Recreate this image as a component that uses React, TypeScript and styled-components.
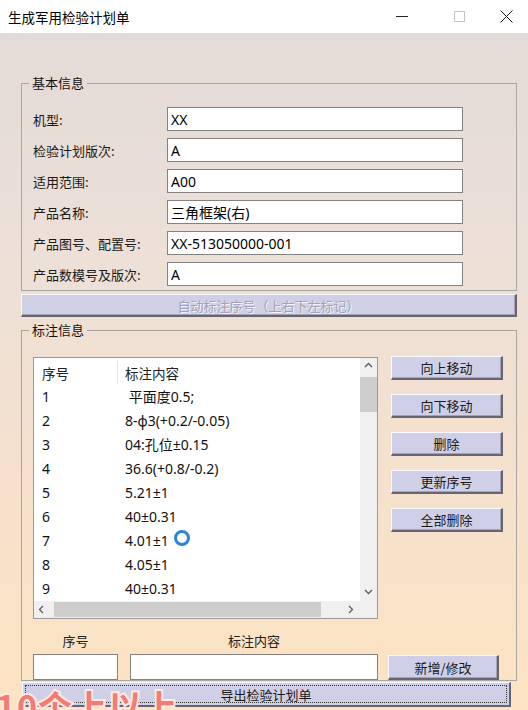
import React from "react";
import styled, { createGlobalStyle } from "styled-components";

const basicRows = [
  { label: "机型:", value: "XX" },
  { label: "检验计划版次:", value: "A" },
  { label: "适用范围:", value: "A00" },
  { label: "产品名称:", value: "三角框架(右)" },
  { label: "产品图号、配置号:", value: "XX-513050000-001" },
  { label: "产品数模号及版次:", value: "A" },
];

const marks = [
  " 平面度0.5;",
  "8-φ3(+0.2/-0.05)",
  "04:孔位±0.15",
  "36.6(+0.8/-0.2)",
  "5.21±1",
  "40±0.31",
  "4.01±1",
  "4.05±1",
  "40±0.31",
];

const sideButtons = ["向上移动", "向下移动", "删除", "更新序号", "全部删除"];

const Chevron = ({ dir }: { dir: "up" | "down" | "left" | "right" }) => {
  const pts = {
    up: "1,5 4.5,1.5 8,5",
    down: "1,2 4.5,5.5 8,2",
    left: "5,1 1.5,4.5 5,8",
    right: "2,1 5.5,4.5 2,8",
  }[dir];
  return (
    <svg width="9" height="9" viewBox="0 0 9 9">
      <polyline points={pts} fill="none" stroke="#5a5a5a" strokeWidth="1.3" />
    </svg>
  );
};

const App = () => {
  return (
    <>
      <GlobalStyle />
      <Window>
        <TitleBar>
          <Title>生成军用检验计划单</Title>
          <WinButton $w={64}>
            <MinIcon />
          </WinButton>
          <WinButton $w={50}>
            <MaxIcon />
          </WinButton>
          <WinButton $w={44}>
            <svg width="13" height="13" viewBox="0 0 13 13">
              <path d="M0.5 0.5 L12.5 12.5 M12.5 0.5 L0.5 12.5" stroke="#111" strokeWidth="1" />
            </svg>
          </WinButton>
        </TitleBar>

        <Body>
          <Group $top={42} $pad="16px 53px 4px 11px">
            <Legend>基本信息</Legend>
            <Rows>
              {basicRows.map((r) => (
                <FieldRow key={r.label}>
                  <FieldLabel>{r.label}</FieldLabel>
                  <TextBox $w={296} $h={24} defaultValue={r.value} readOnly />
                </FieldRow>
              ))}
            </Rows>
          </Group>

          <AutoButton disabled>自动标注序号（上右下左标记）</AutoButton>

          <Group $top={5} $pad="19px 13px 0 11px">
            <Legend>标注信息</Legend>
            <ListArea>
              <ListView>
                <Table>
                  <HeadRow>
                    <HeadCell $first>序号</HeadCell>
                    <HeadCell>标注内容</HeadCell>
                  </HeadRow>
                  {marks.map((m, i) => (
                    <ItemRow key={i}>
                      <Cell $first>{i + 1}</Cell>
                      <Cell>{m}</Cell>
                    </ItemRow>
                  ))}
                </Table>
                <VScroll>
                  <Arrow>
                    <Chevron dir="up" />
                  </Arrow>
                  <VTrack>
                    <VThumb />
                  </VTrack>
                  <Arrow>
                    <Chevron dir="down" />
                  </Arrow>
                </VScroll>
                <HScroll>
                  <Arrow>
                    <Chevron dir="left" />
                  </Arrow>
                  <HTrack>
                    <HThumb />
                  </HTrack>
                  <Arrow>
                    <Chevron dir="right" />
                  </Arrow>
                </HScroll>
                <Corner />
              </ListView>
              <SideButtons>
                {sideButtons.map((b) => (
                  <Btn key={b} $w={112} $h={24}>
                    {b}
                  </Btn>
                ))}
              </SideButtons>
            </ListArea>

            <EditLabels>
              <EditLabel $w={85}>序号</EditLabel>
              <EditLabel $w={248}>标注内容</EditLabel>
            </EditLabels>
            <EditRow>
              <TextBox $w={85} $h={26} readOnly />
              <TextBox $w={248} $h={26} readOnly />
              <Btn $w={111} $h={25}>新增/修改</Btn>
            </EditRow>
          </Group>

          <ExportButton>
            <FocusRect>导出检验计划单</FocusRect>
          </ExportButton>
        </Body>

        <CursorRing />
        <Subtitle>10个上以上</Subtitle>
      </Window>
    </>
  );
};

const GlobalStyle = createGlobalStyle`
  html, body {
    margin: 0;
    padding: 0;
  }
  body {
    font-family: "Noto Sans", "Noto Sans CJK SC", sans-serif;
    color: #111;
  }
`;

const Window = styled.div`
  position: relative;
  width: 528px;
  height: 710px;
  overflow: hidden;
  display: flex;
  flex-direction: column;
  background: linear-gradient(180deg, #e2dad7 0%, #ece0d8 35%, #f6e1cc 70%, #fde3c2 100%);
`;

const TitleBar = styled.div`
  height: 33px;
  flex-shrink: 0;
  background: #fff;
  display: flex;
  align-items: center;
  padding-left: 8px;
`;

const Title = styled.div`
  flex: 1;
  font-family: "Noto Sans CJK SC", sans-serif;
  font-size: 13.5px;
  color: #000;
`;

const WinButton = styled.div<{ $w: number }>`
  width: ${(p) => p.$w}px;
  height: 33px;
  display: flex;
  align-items: center;
  justify-content: center;
`;

const MinIcon = styled.div`
  width: 12px;
  height: 1px;
  background: #222;
`;

const MaxIcon = styled.div`
  width: 9px;
  height: 9px;
  border: 1px solid #c4c4c4;
`;

const Body = styled.div`
  display: flex;
  flex-direction: column;
  padding: 0 11px 0 21px;
`;

const Group = styled.fieldset<{ $top: number; $pad: string }>`
  margin: ${(p) => p.$top}px 0 0 0;
  padding: ${(p) => p.$pad};
  min-width: 0;
  border: 1px solid #a9a5a1;
`;

const Legend = styled.legend`
  font-family: "Noto Sans CJK SC", sans-serif;
  font-size: 13px;
  line-height: 16px;
  padding: 0 3px;
  margin-left: -4px;
  color: #111;
`;

const Rows = styled.div`
  display: flex;
  flex-direction: column;
  gap: 7px;
`;

const FieldRow = styled.div`
  display: flex;
  align-items: center;
  height: 24px;
`;

const FieldLabel = styled.div`
  width: 134px;
  font-family: "Noto Sans CJK SC", sans-serif;
  font-size: 13px;
  color: #1a1a1a;
`;

const TextBox = styled.input<{ $w: number; $h: number }>`
  box-sizing: border-box;
  width: ${(p) => p.$w}px;
  height: ${(p) => p.$h}px;
  border: 1px solid #858180;
  background: #fff;
  padding: 0 3px;
  font-family: "Noto Sans", "Noto Sans CJK SC", sans-serif;
  font-size: 14px;
  color: #000;
  outline: none;
`;

const Btn = styled.button<{ $w: number; $h: number }>`
  box-sizing: border-box;
  width: ${(p) => p.$w}px;
  height: ${(p) => p.$h}px;
  padding: 0;
  background: #cfd0e7;
  border-top: 1px solid #fafaff;
  border-left: 1px solid #fafaff;
  border-right: 2px solid #666672;
  border-bottom: 2px solid #666672;
  box-shadow: inset -1px -1px 0 #a3a3b4;
  font-family: "Noto Sans CJK SC", sans-serif;
  font-size: 13px;
  color: #1a1a1a;
`;

const AutoButton = styled.button`
  box-sizing: border-box;
  margin-top: 3px;
  width: 496px;
  height: 23px;
  padding: 0;
  background: #cfd0e6;
  border-top: 1px solid #fafaff;
  border-left: 1px solid #fafaff;
  border-right: 2px solid #666672;
  border-bottom: 2px solid #666672;
  box-shadow: inset -1px -1px 0 #a3a3b4;
  font-family: "Noto Sans CJK SC", sans-serif;
  font-size: 13px;
  color: #a2a2b6;
  text-shadow: 1px 1px 0 #f4f4fb;
`;

const ListArea = styled.div`
  display: flex;
  align-items: flex-start;
  gap: 13px;
`;

const ListView = styled.div`
  box-sizing: border-box;
  width: 345px;
  height: 262px;
  border: 1px solid #9a9a9a;
  background: #fff;
  display: grid;
  grid-template-columns: 1fr 17px;
  grid-template-rows: 1fr 17px;
`;

const Table = styled.div`
  overflow: hidden;
  display: flex;
  flex-direction: column;
`;

const HeadRow = styled.div`
  display: flex;
  height: 26px;
  flex-shrink: 0;
`;

const HeadCell = styled.div<{ $first?: boolean }>`
  box-sizing: border-box;
  width: ${(p) => (p.$first ? "84px" : "auto")};
  flex: ${(p) => (p.$first ? "none" : "1")};
  padding-left: ${(p) => (p.$first ? "8px" : "7px")};
  display: flex;
  align-items: center;
  font-family: "Noto Sans CJK SC", sans-serif;
  font-size: 13.5px;
  color: #222;
  border-right: ${(p) => (p.$first ? "1px solid #e6e6e6" : "none")};
  margin: 3px 0 0;
`;

const ItemRow = styled.div`
  display: flex;
  height: 24px;
  flex-shrink: 0;
  align-items: center;
`;

const Cell = styled.div<{ $first?: boolean }>`
  box-sizing: border-box;
  width: ${(p) => (p.$first ? "84px" : "auto")};
  flex: ${(p) => (p.$first ? "none" : "1")};
  padding-left: ${(p) => (p.$first ? "8px" : "7px")};
  white-space: pre;
  font-family: "Noto Sans", "Noto Sans CJK SC", sans-serif;
  font-size: 14px;
  color: #111;
`;

const VScroll = styled.div`
  display: flex;
  flex-direction: column;
  background: #f0f0f0;
`;

const HScroll = styled.div`
  display: flex;
  background: #f0f0f0;
`;

const Corner = styled.div`
  background: #f0f0f0;
`;

const Arrow = styled.div`
  width: 17px;
  height: 17px;
  flex-shrink: 0;
  display: flex;
  align-items: center;
  justify-content: center;
`;

const VTrack = styled.div`
  flex: 1;
  padding-top: 2px;
`;

const VThumb = styled.div`
  height: 35px;
  background: #cdcdcd;
`;

const HTrack = styled.div`
  flex: 1;
  display: flex;
  align-items: center;
  padding-left: 3px;
`;

const HThumb = styled.div`
  width: 267px;
  height: 15px;
  background: #cdcdcd;
`;

const SideButtons = styled.div`
  display: flex;
  flex-direction: column;
  gap: 14px;
  margin-top: -1px;
`;

const EditLabels = styled.div`
  display: flex;
  gap: 12px;
  margin-top: 14px;
  height: 16px;
`;

const EditLabel = styled.div<{ $w: number }>`
  width: ${(p) => p.$w}px;
  text-align: center;
  font-family: "Noto Sans CJK SC", sans-serif;
  font-size: 13px;
  line-height: 16px;
  color: #222;
`;

const EditRow = styled.div`
  display: flex;
  align-items: flex-end;
  margin-top: 5px;
  gap: 12px;

  & > button {
    margin-left: -2px;
  }
`;

const ExportButton = styled.button`
  box-sizing: border-box;
  margin: 1px 0 0 1px;
  width: 489px;
  height: 25px;
  padding: 2px;
  background: #cfd0e7;
  border-top: 1px solid #fafaff;
  border-left: 1px solid #fafaff;
  border-right: 2px solid #666672;
  border-bottom: 2px solid #666672;
  font-family: "Noto Sans CJK SC", sans-serif;
  font-size: 13px;
  color: #1a1a1a;
`;

const FocusRect = styled.div`
  height: 100%;
  box-sizing: border-box;
  border: 1px dotted #333;
  display: flex;
  align-items: center;
  justify-content: center;
`;

const CursorRing = styled.div`
  position: absolute;
  left: 174px;
  top: 530px;
  width: 10px;
  height: 10px;
  border: 3px solid #2b84d9;
  border-radius: 50%;
`;

const Subtitle = styled.div`
  position: absolute;
  left: -4px;
  top: 689px;
  font-family: "Noto Sans CJK SC", sans-serif;
  font-weight: 700;
  font-size: 34px;
  line-height: 34px;
  letter-spacing: 1px;
  color: #f27c73;
  -webkit-text-stroke: 4px #ffe9e4;
  paint-order: stroke fill;
  white-space: nowrap;
`;

export default App;
